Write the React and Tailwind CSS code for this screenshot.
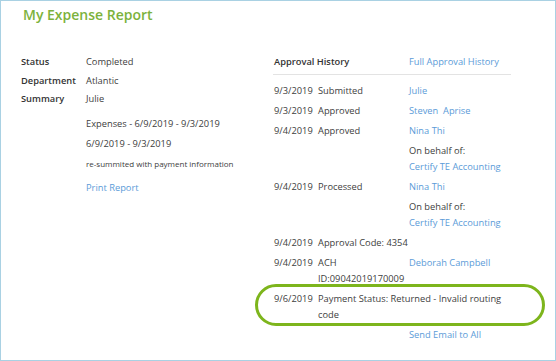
import React from "react";

const link = "text-[#5b9bd8]";

const history = [
  { date: "9/3/2019", action: "Submitted", who: "Julie" },
  { date: "9/3/2019", action: "Approved", who: "Steven  Aprise" },
  { date: "9/4/2019", action: "Approved", who: "Nina Thi", behalf: "Certify TE Accounting" },
  { date: "9/4/2019", action: "Processed", who: "Nina Thi", behalf: "Certify TE Accounting" },
  { date: "9/4/2019", action: "Approval Code: 4354" },
  { date: "9/4/2019", action: "ACH", sub: "ID:09042019170009", who: "Deborah Campbell" },
];

export default function App() {
  return (
    <div className="relative w-[556px] h-[361px] bg-white border border-[#a9d1e3] font-['Open_Sans',sans-serif] text-[9.3px] leading-[16px] text-[#404040]">
      <h1 className="pl-[22px] pt-[2px] text-[14px] leading-[24px] font-semibold text-[#7cb23c]">
        My Expense Report
      </h1>

      <div className="flex pt-[27px]">
        <div className="w-[272px] shrink-0 pl-[20px]">
          <div className="flex flex-col gap-[2.5px]">
            <div className="flex">
              <span className="w-[65px] font-semibold text-[#333]">Status</span>
              <span>Completed</span>
            </div>
            <div className="flex">
              <span className="w-[65px] font-semibold text-[#333]">Department</span>
              <span>Atlantic</span>
            </div>
            <div className="flex">
              <span className="w-[65px] font-semibold text-[#333]">Summary</span>
              <span>Julie</span>
            </div>
          </div>
          <div className="pl-[65px] mt-[9px] flex flex-col gap-[4px]">
            <div>Expenses - 6/9/2019 - 9/3/2019</div>
            <div>6/9/2019 - 9/3/2019</div>
            <div className="text-[8px]">re-summited with payment information</div>
            <div className={`mt-[4px] ${link}`}>Print Report</div>
          </div>
        </div>

        <div className="w-[238px] shrink-0">
          <div className="flex border-b border-[#e3e3e3] pb-[4px] pl-[1px]">
            <span className="w-[135px] font-semibold text-[#333]">Approval History</span>
            <span className={link}>Full Approval History</span>
          </div>
          <div className="mt-[8px] flex flex-col gap-[4px] pl-[1px]">
            {history.map((h, i) => (
              <div key={i} className="flex">
                <span className="w-[44px] shrink-0">{h.date}</span>
                <div className="w-[91px] shrink-0">
                  <div className="whitespace-nowrap">{h.action}</div>
                  {h.sub && <div>{h.sub}</div>}
                </div>
                <div>
                  {h.who && <div className={link}>{h.who.replace("  ", "\u00a0 ")}</div>}
                  {h.behalf && (
                    <>
                      <div className="mt-[4px]">On behalf of:</div>
                      <div className={link}>{h.behalf}</div>
                    </>
                  )}
                </div>
              </div>
            ))}
            <div className="flex">
              <span className="w-[44px] shrink-0">9/6/2019</span>
              <span className="w-[186px]">Payment Status: Returned - Invalid routing code</span>
            </div>
            <div className={`pl-[135px] ${link}`}>Send Email to All</div>
          </div>
        </div>
      </div>

      <div className="absolute left-[254px] top-[283px] w-[290px] h-[42px] rounded-full border-[3px] border-[#7db51c]" />
    </div>
  );
}
